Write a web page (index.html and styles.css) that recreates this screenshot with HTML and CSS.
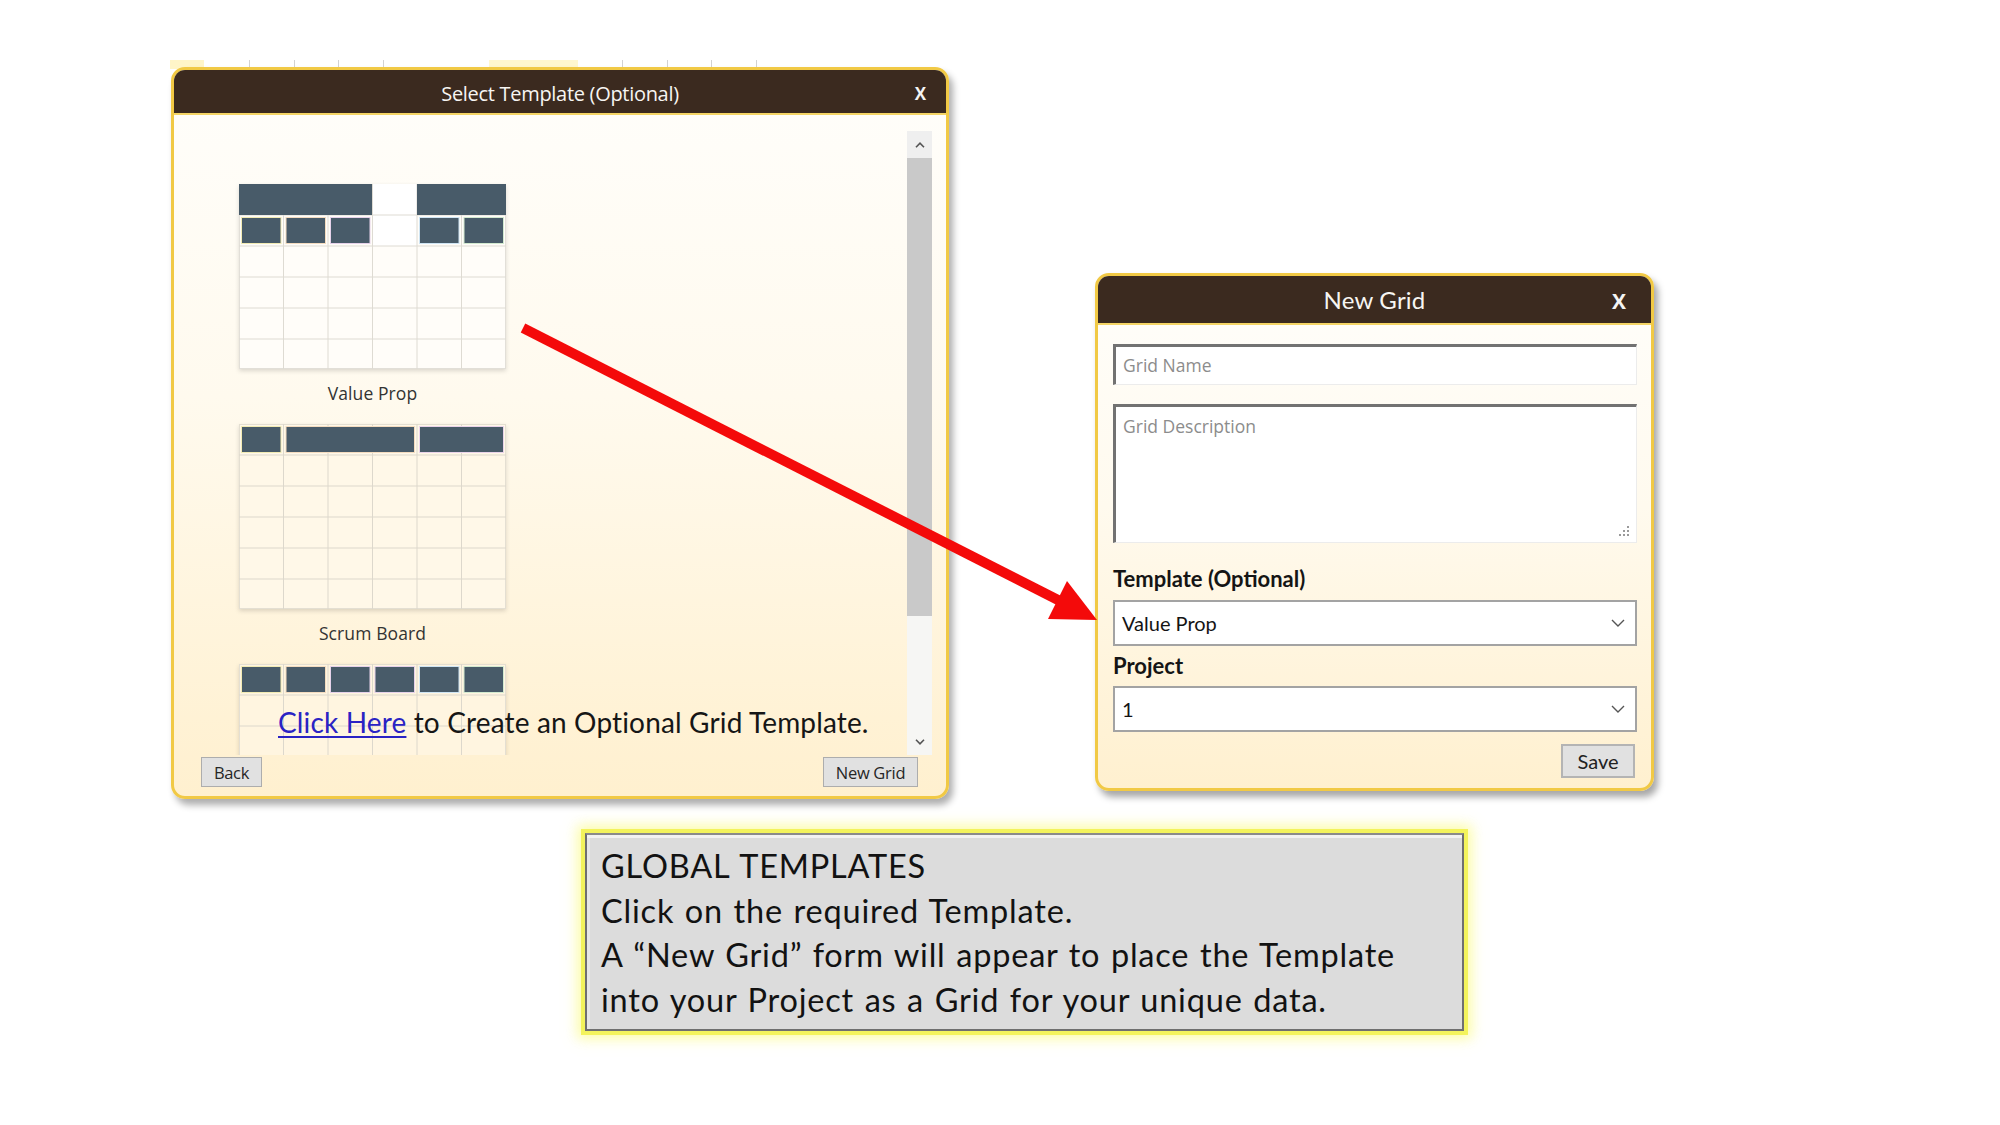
FILE: index.html
```html
<!DOCTYPE html>
<html lang="en">
<head>
<meta charset="utf-8">
<title>Global Templates</title>
<link rel="stylesheet" href="styles.css">
</head>
<body>
<div class="slide">
  <div class="remnant patch-a"></div>
  <div class="remnant patch-b"></div>
  <div class="remnant ticks-a"></div>
  <div class="remnant ticks-b"></div>

  <section class="dlg dlg-select">
    <header class="dlg-head head-select">
      <span class="dlg-title title-select">Select Template (Optional)</span>
      <span class="dlg-x x-select">X</span>
    </header>
    <div class="select-body">
      <div class="tpl-list">
        <div class="tpl">
          <svg class="thumb" width="267" height="185" viewBox="0 0 267 185">
            <rect x="0.5" y="0.5" width="266" height="184" fill="#fffdf9" stroke="#e2dfd8"/>
            <rect x="133.5" y="0" width="44.5" height="62" fill="#ffffff"/>
            <g stroke="#dedbd3" stroke-width="1">
              <line x1="44.5" y1="0" x2="44.5" y2="185"/>
              <line x1="89" y1="0" x2="89" y2="185"/>
              <line x1="133.5" y1="0" x2="133.5" y2="185"/>
              <line x1="178" y1="0" x2="178" y2="185"/>
              <line x1="222.5" y1="0" x2="222.5" y2="185"/>
              <line x1="0" y1="31" x2="267" y2="31"/>
              <line x1="0" y1="62" x2="267" y2="62"/>
              <line x1="0" y1="93" x2="267" y2="93"/>
              <line x1="0" y1="124" x2="267" y2="124"/>
              <line x1="0" y1="155" x2="267" y2="155"/>
            </g>
            <rect x="0" y="0" width="133" height="31" fill="#485b69"/>
            <rect x="178" y="0" width="89" height="31" fill="#485b69"/>
            <rect x="2.5" y="33.5" width="39.5" height="26" fill="#485b69" stroke="#f2ebb4"/>
            <rect x="47" y="33.5" width="39.5" height="26" fill="#485b69" stroke="#f4dcc0"/>
            <rect x="91.5" y="33.5" width="39.5" height="26" fill="#485b69" stroke="#e6d2ea"/>
            <rect x="180.5" y="33.5" width="39.5" height="26" fill="#485b69" stroke="#cfe5f4"/>
            <rect x="225" y="33.5" width="39.5" height="26" fill="#485b69" stroke="#d3ead0"/>
          </svg>
          <div class="tpl-name">Value Prop</div>
        </div>
        <div class="tpl">
          <svg class="thumb" width="267" height="185" viewBox="0 0 267 185">
            <rect x="0.5" y="0.5" width="266" height="184" fill="#fff8e8" stroke="#e4dfd2"/>
            <g stroke="#ddd8cc" stroke-width="1">
              <line x1="44.5" y1="0" x2="44.5" y2="185"/>
              <line x1="89" y1="0" x2="89" y2="185"/>
              <line x1="133.5" y1="0" x2="133.5" y2="185"/>
              <line x1="178" y1="0" x2="178" y2="185"/>
              <line x1="222.5" y1="0" x2="222.5" y2="185"/>
              <line x1="0" y1="31" x2="267" y2="31"/>
              <line x1="0" y1="62" x2="267" y2="62"/>
              <line x1="0" y1="93" x2="267" y2="93"/>
              <line x1="0" y1="124" x2="267" y2="124"/>
              <line x1="0" y1="155" x2="267" y2="155"/>
            </g>
            <rect x="2.5" y="2.5" width="39.5" height="26" fill="#485b69" stroke="#f2ebb4"/>
            <rect x="47" y="2.5" width="128.5" height="26" fill="#485b69" stroke="#f4dcc0"/>
            <rect x="180.5" y="2.5" width="84" height="26" fill="#485b69" stroke="#ead4ea"/>
          </svg>
          <div class="tpl-name">Scrum Board</div>
        </div>
        <div class="tpl">
          <svg class="thumb" width="267" height="185" viewBox="0 0 267 185">
            <rect x="0.5" y="0.5" width="266" height="184" fill="#fff5e0" stroke="#e4dfd2"/>
            <g stroke="#ddd8cc" stroke-width="1">
              <line x1="44.5" y1="0" x2="44.5" y2="185"/>
              <line x1="89" y1="0" x2="89" y2="185"/>
              <line x1="133.5" y1="0" x2="133.5" y2="185"/>
              <line x1="178" y1="0" x2="178" y2="185"/>
              <line x1="222.5" y1="0" x2="222.5" y2="185"/>
              <line x1="0" y1="31" x2="267" y2="31"/>
              <line x1="0" y1="62" x2="267" y2="62"/>
              <line x1="0" y1="93" x2="267" y2="93"/>
            </g>
            <rect x="2.5" y="2.5" width="39.5" height="26" fill="#485b69" stroke="#f2ebb4"/>
            <rect x="47" y="2.5" width="39.5" height="26" fill="#485b69" stroke="#f4dcc0"/>
            <rect x="91.5" y="2.5" width="39.5" height="26" fill="#485b69" stroke="#e6d2ea"/>
            <rect x="136" y="2.5" width="39.5" height="26" fill="#485b69" stroke="#e6d2ea"/>
            <rect x="180.5" y="2.5" width="39.5" height="26" fill="#485b69" stroke="#cfe5f4"/>
            <rect x="225" y="2.5" width="39.5" height="26" fill="#485b69" stroke="#d3ead0"/>
          </svg>
        </div>
      </div>
      <div class="scroll">
        <div class="sb-up">
          <svg width="10" height="6" viewBox="0 0 10 6"><polyline points="1,5.2 5,1.2 9,5.2" fill="none" stroke="#555" stroke-width="1.6"/></svg>
        </div>
        <div class="sb-thumb"></div>
        <div class="sb-rest">
          <svg width="10" height="6" viewBox="0 0 10 6"><polyline points="1,0.8 5,4.8 9,0.8" fill="none" stroke="#555" stroke-width="1.6"/></svg>
        </div>
      </div>
      <p class="cta"><a class="cta-link" href="#">Click Here</a> to Create an Optional Grid Template.</p>
    </div>
    <footer class="select-foot">
      <button class="btn btn-back" type="button">Back</button>
      <button class="btn btn-newgrid" type="button">New Grid</button>
    </footer>
  </section>

  <section class="dlg dlg-new">
    <header class="dlg-head head-new">
      <span class="dlg-title title-new">New Grid</span>
      <span class="dlg-x x-new">X</span>
    </header>
    <div class="new-body">
      <div class="field input-name"><span class="ph">Grid Name</span></div>
      <div class="field input-desc">
        <span class="ph">Grid Description</span>
        <svg class="grip" width="12" height="12" viewBox="0 0 12 12">
          <g fill="#9a9a9a">
            <rect x="9" y="1" width="2" height="2"/>
            <rect x="9" y="5" width="2" height="2"/>
            <rect x="5" y="5" width="2" height="2"/>
            <rect x="9" y="9" width="2" height="2"/>
            <rect x="5" y="9" width="2" height="2"/>
            <rect x="1" y="9" width="2" height="2"/>
          </g>
        </svg>
      </div>
      <div class="lbl lbl-template">Template (Optional)</div>
      <div class="sel">
        <span class="sel-val">Value Prop</span>
        <svg class="chev" width="14" height="8" viewBox="0 0 14 8"><polyline points="1,1 7,7 13,1" fill="none" stroke="#555" stroke-width="1.4"/></svg>
      </div>
      <div class="lbl lbl-project">Project</div>
      <div class="sel">
        <span class="sel-val">1</span>
        <svg class="chev" width="14" height="8" viewBox="0 0 14 8"><polyline points="1,1 7,7 13,1" fill="none" stroke="#555" stroke-width="1.4"/></svg>
      </div>
      <div class="save-row">
        <button class="btn btn-save" type="button">Save</button>
      </div>
    </div>
  </section>

  <svg class="arrow" width="2000" height="1125" viewBox="0 0 2000 1125">
    <line x1="523" y1="328" x2="1060" y2="601" stroke="#f40a0a" stroke-width="10"/>
    <polygon points="1097,620 1048,619 1067,581" fill="#f40a0a"/>
  </svg>

  <div class="note">
    <p class="note-line">GLOBAL TEMPLATES</p>
    <p class="note-line">Click on the required Template.</p>
    <p class="note-line">A “New Grid” form will appear to place the Template</p>
    <p class="note-line">into your Project as a Grid for your unique data.</p>
  </div>
</div>
</body>
</html>
```

FILE: styles.css
```css
html, body {
  margin: 0;
  padding: 0;
  background: #ffffff;
}

.slide {
  position: relative;
  width: 2000px;
  height: 1125px;
  overflow: hidden;
  background: #ffffff;
  font-family: "Open Sans", "Liberation Sans", sans-serif;
}

/* faint remnants of the app background peeking above the dialog */
.remnant {
  position: absolute;
  top: 60px;
  height: 9px;
}
.patch-a { left: 170px; width: 34px; background: #fff5c8; }
.patch-b { left: 489px; width: 89px; background: #fff7cf; }
.ticks-a, .ticks-b {
  width: 140px;
  background: repeating-linear-gradient(90deg, #d2d2d2 0 1px, transparent 1px 44.7px);
}
.ticks-a { left: 249px; }
.ticks-b { left: 622px; }

/* ---------- dialogs ---------- */
.dlg {
  position: absolute;
  box-sizing: border-box;
  border: 3px solid #f1c945;
  border-radius: 14px;
  overflow: hidden;
  display: flex;
  flex-direction: column;
  background: linear-gradient(180deg, #fffefb 0%, #fffaee 45%, #fff0cf 100%);
}

.dlg-head {
  flex: none;
  position: relative;
  box-sizing: border-box;
  display: flex;
  align-items: center;
  justify-content: center;
  background: #3b2a1f;
  border-bottom: 2px solid #f4d566;
  color: #f7f5f2;
}

.dlg-x {
  position: absolute;
  font-family: "Open Sans", "Liberation Sans", sans-serif;
  font-weight: 700;
  color: #f4f4f4;
}

/* Select Template dialog */
.dlg-select {
  left: 171px;
  top: 67px;
  width: 778px;
  height: 732px;
  box-shadow: 4px 6px 7px rgba(0, 0, 0, 0.32);
}

.head-select {
  height: 45px;
  padding-top: 4px;
}

.title-select {
  font-size: 20px;
  letter-spacing: -0.3px;
}

.x-select {
  right: 20px;
  top: 12px;
  font-size: 17px;
}

.select-body {
  flex: 1;
  position: relative;
  display: flex;
  min-height: 0;
}

.tpl-list {
  flex: 1;
  padding: 69px 0 0 65px;
  overflow: hidden;
}

.tpl {
  width: 267px;
  display: flex;
  flex-direction: column;
  align-items: center;
}

.thumb {
  display: block;
  filter: drop-shadow(0 2px 2px rgba(0, 0, 0, 0.14));
}

.tpl-name {
  margin: 14px 0 21px;
  font-size: 17.5px;
  line-height: 20px;
  letter-spacing: 0.1px;
  color: #333333;
}

.scroll {
  flex: none;
  width: 25px;
  margin: 16px 14px 0 0;
  display: flex;
  flex-direction: column;
  background: #f3f3f3;
}

.sb-up {
  height: 27px;
  display: flex;
  align-items: center;
  justify-content: center;
  background: #efefef;
}

.sb-thumb {
  height: 458px;
  background: #c9c9c9;
}

.sb-rest {
  flex: 1;
  display: flex;
  align-items: flex-end;
  justify-content: center;
  padding-bottom: 10px;
  background: #f6f6f4;
}

.cta {
  position: absolute;
  left: 104px;
  bottom: 15px;
  margin: 0;
  font-family: "Lato", "Liberation Sans", sans-serif;
  font-size: 28px;
  line-height: 36px;
  letter-spacing: 0.15px;
  color: #161616;
}

.cta-link {
  color: #2a23c4;
  text-decoration: underline;
  text-decoration-thickness: 1.5px;
  text-underline-offset: 3px;
}

.select-foot {
  flex: none;
  display: flex;
  justify-content: space-between;
  align-items: flex-start;
  padding: 2px 28px 9px 27px;
}

.btn {
  box-sizing: border-box;
  height: 30px;
  margin: 0;
  padding: 0;
  border: 1px solid #adadad;
  background: #e1e1e1;
  color: #262626;
  font-family: "Open Sans", "Liberation Sans", sans-serif;
  font-size: 16.5px;
  letter-spacing: -0.3px;
}

.btn-back { width: 61px; }
.btn-newgrid { width: 95px; }

/* New Grid dialog */
.dlg-new {
  left: 1095px;
  top: 273px;
  width: 559px;
  height: 518px;
  box-shadow: 4px 6px 7px rgba(0, 0, 0, 0.35);
}

.head-new { height: 49px; }

.title-new {
  font-family: "Lato", "Open Sans", sans-serif;
  font-size: 24px;
  letter-spacing: 0.2px;
}

.x-new {
  right: 25px;
  top: 11px;
  font-size: 21px;
}

.new-body {
  flex: 1;
  display: flex;
  flex-direction: column;
  padding: 19px 14px 10px 15px;
}

.field {
  position: relative;
  box-sizing: border-box;
  background: #ffffff;
  border-top: 3px solid #727272;
  border-left: 3px solid #727272;
  border-right: 1px solid #ececec;
  border-bottom: 1px solid #ececec;
  padding: 6px 0 0 7px;
}

.input-name { height: 41px; }

.input-desc {
  height: 139px;
  margin-top: 19px;
  padding-top: 7px;
}

.ph {
  font-family: "Open Sans", "Liberation Sans", sans-serif;
  font-size: 17.5px;
  line-height: 24px;
  color: #8c8c8c;
}

.grip {
  position: absolute;
  right: 6px;
  bottom: 5px;
}

.lbl {
  font-family: "Lato", "Liberation Sans", sans-serif;
  font-weight: 700;
  font-size: 22px;
  line-height: 28px;
  color: #151515;
}

.lbl-template { margin: 22px 0 7px; }
.lbl-project { margin: 6px 0 6px; }

.sel {
  box-sizing: border-box;
  height: 46px;
  display: flex;
  align-items: center;
  justify-content: space-between;
  padding: 0 10px 0 7px;
  background: #ffffff;
  border: 2px solid #a3a3a3;
}

.sel-val {
  font-family: "Lato", "Liberation Sans", sans-serif;
  font-size: 20px;
  color: #141414;
}

.save-row {
  display: flex;
  justify-content: flex-end;
  margin-top: 12px;
  padding-right: 2px;
}

.btn-save {
  width: 74px;
  height: 34px;
  border: 2px solid #b4b4b4;
  font-family: "Lato", "Liberation Sans", sans-serif;
  font-size: 20px;
  letter-spacing: 0;
  color: #222222;
}

/* arrow overlay */
.arrow {
  position: absolute;
  left: 0;
  top: 0;
  pointer-events: none;
}

/* info note */
.note {
  position: absolute;
  left: 585px;
  top: 833px;
  width: 879px;
  height: 198px;
  box-sizing: border-box;
  padding: 9px 0 0 14px;
  background: #dcdcdc;
  border: 2px solid #6f6f6f;
  border-top-color: #8a8a8a;
  box-shadow: inset 0 3px 0 #f2f2f2, inset 3px 0 0 #e6e6e6, 0 0 0 4px #f3f35c, 0 0 12px 8px rgba(250, 250, 100, 0.55);
}

.note-line {
  margin: 0;
  font-family: "Lato", "Liberation Sans", sans-serif;
  font-size: 32.5px;
  line-height: 44.7px;
  letter-spacing: 0.8px;
  word-spacing: 1.5px;
  color: #121212;
}
```
